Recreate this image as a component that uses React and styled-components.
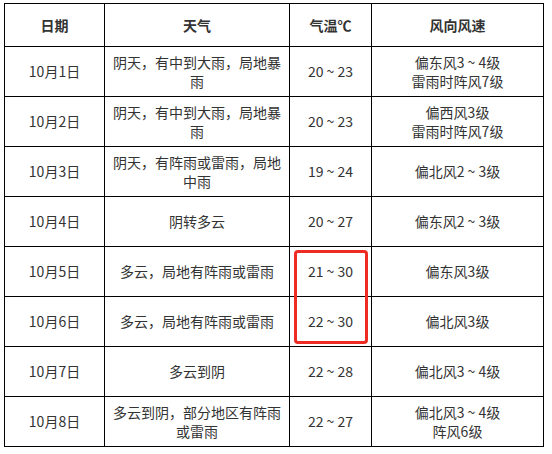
import React from 'react';
import styled, { createGlobalStyle } from 'styled-components';

const GlobalStyle = createGlobalStyle`
  body {
    margin: 0;
    background: #fff;
    font-family: "Noto Sans CJK SC", "Noto Sans", sans-serif;
  }
`;

const rows = [
  { date: '10月1日', weather: '阴天，有中到大雨，局地暴雨', temp: '20 ~ 23', wind: ['偏东风3 ~ 4级', '雷雨时阵风7级'] },
  { date: '10月2日', weather: '阴天，有中到大雨，局地暴雨', temp: '20 ~ 23', wind: ['偏西风3级', '雷雨时阵风7级'] },
  { date: '10月3日', weather: '阴天，有阵雨或雷雨，局地中雨', temp: '19 ~ 24', wind: ['偏北风2 ~ 3级'] },
  { date: '10月4日', weather: '阴转多云', temp: '20 ~ 27', wind: ['偏东风2 ~ 3级'] },
  { date: '10月5日', weather: '多云，局地有阵雨或雷雨', temp: '21 ~ 30', wind: ['偏东风3级'], mark: true },
  { date: '10月6日', weather: '多云，局地有阵雨或雷雨', temp: '22 ~ 30', wind: ['偏北风3级'] },
  { date: '10月7日', weather: '多云到阴', temp: '22 ~ 28', wind: ['偏北风3 ~ 4级'] },
  { date: '10月8日', weather: '多云到阴，部分地区有阵雨或雷雨', temp: '22 ~ 27', wind: ['偏北风3 ~ 4级', '阵风6级'] },
];

const Page = styled.div`
  padding: 3px 0 0 4px;
`;

const Table = styled.table`
  border-collapse: collapse;
  table-layout: fixed;
  width: 539px;
  color: #333;
  font-size: 14px;
  line-height: 19px;
`;

const HeadCell = styled.th`
  border: 1px solid #000;
  height: 42px;
  padding: 0;
  font-weight: bold;
  text-align: center;
  vertical-align: middle;
`;

const Cell = styled.td`
  border: 1px solid #000;
  height: 49px;
  padding: 0 7px;
  text-align: center;
  vertical-align: middle;
  position: relative;
`;

const Highlight = styled.span`
  position: absolute;
  left: 4px;
  top: 3px;
  width: 74px;
  height: 94px;
  box-sizing: border-box;
  border: 3px solid #ee2c24;
  border-radius: 4px;
  pointer-events: none;
`;

export default function App() {
  return (
    <Page>
      <GlobalStyle />
      <Table>
        <colgroup>
          <col style={{ width: 100 }} />
          <col style={{ width: 185 }} />
          <col style={{ width: 82 }} />
          <col style={{ width: 172 }} />
        </colgroup>
        <thead>
          <tr>
            <HeadCell>日期</HeadCell>
            <HeadCell>天气</HeadCell>
            <HeadCell>气温℃</HeadCell>
            <HeadCell>风向风速</HeadCell>
          </tr>
        </thead>
        <tbody>
          {rows.map((r) => (
            <tr key={r.date}>
              <Cell>{r.date}</Cell>
              <Cell>{r.weather}</Cell>
              <Cell>
                {r.mark && <Highlight />}
                {r.temp}
              </Cell>
              <Cell>
                {r.wind.map((w, i) => (
                  <div key={i}>{w}</div>
                ))}
              </Cell>
            </tr>
          ))}
        </tbody>
      </Table>
    </Page>
  );
}
